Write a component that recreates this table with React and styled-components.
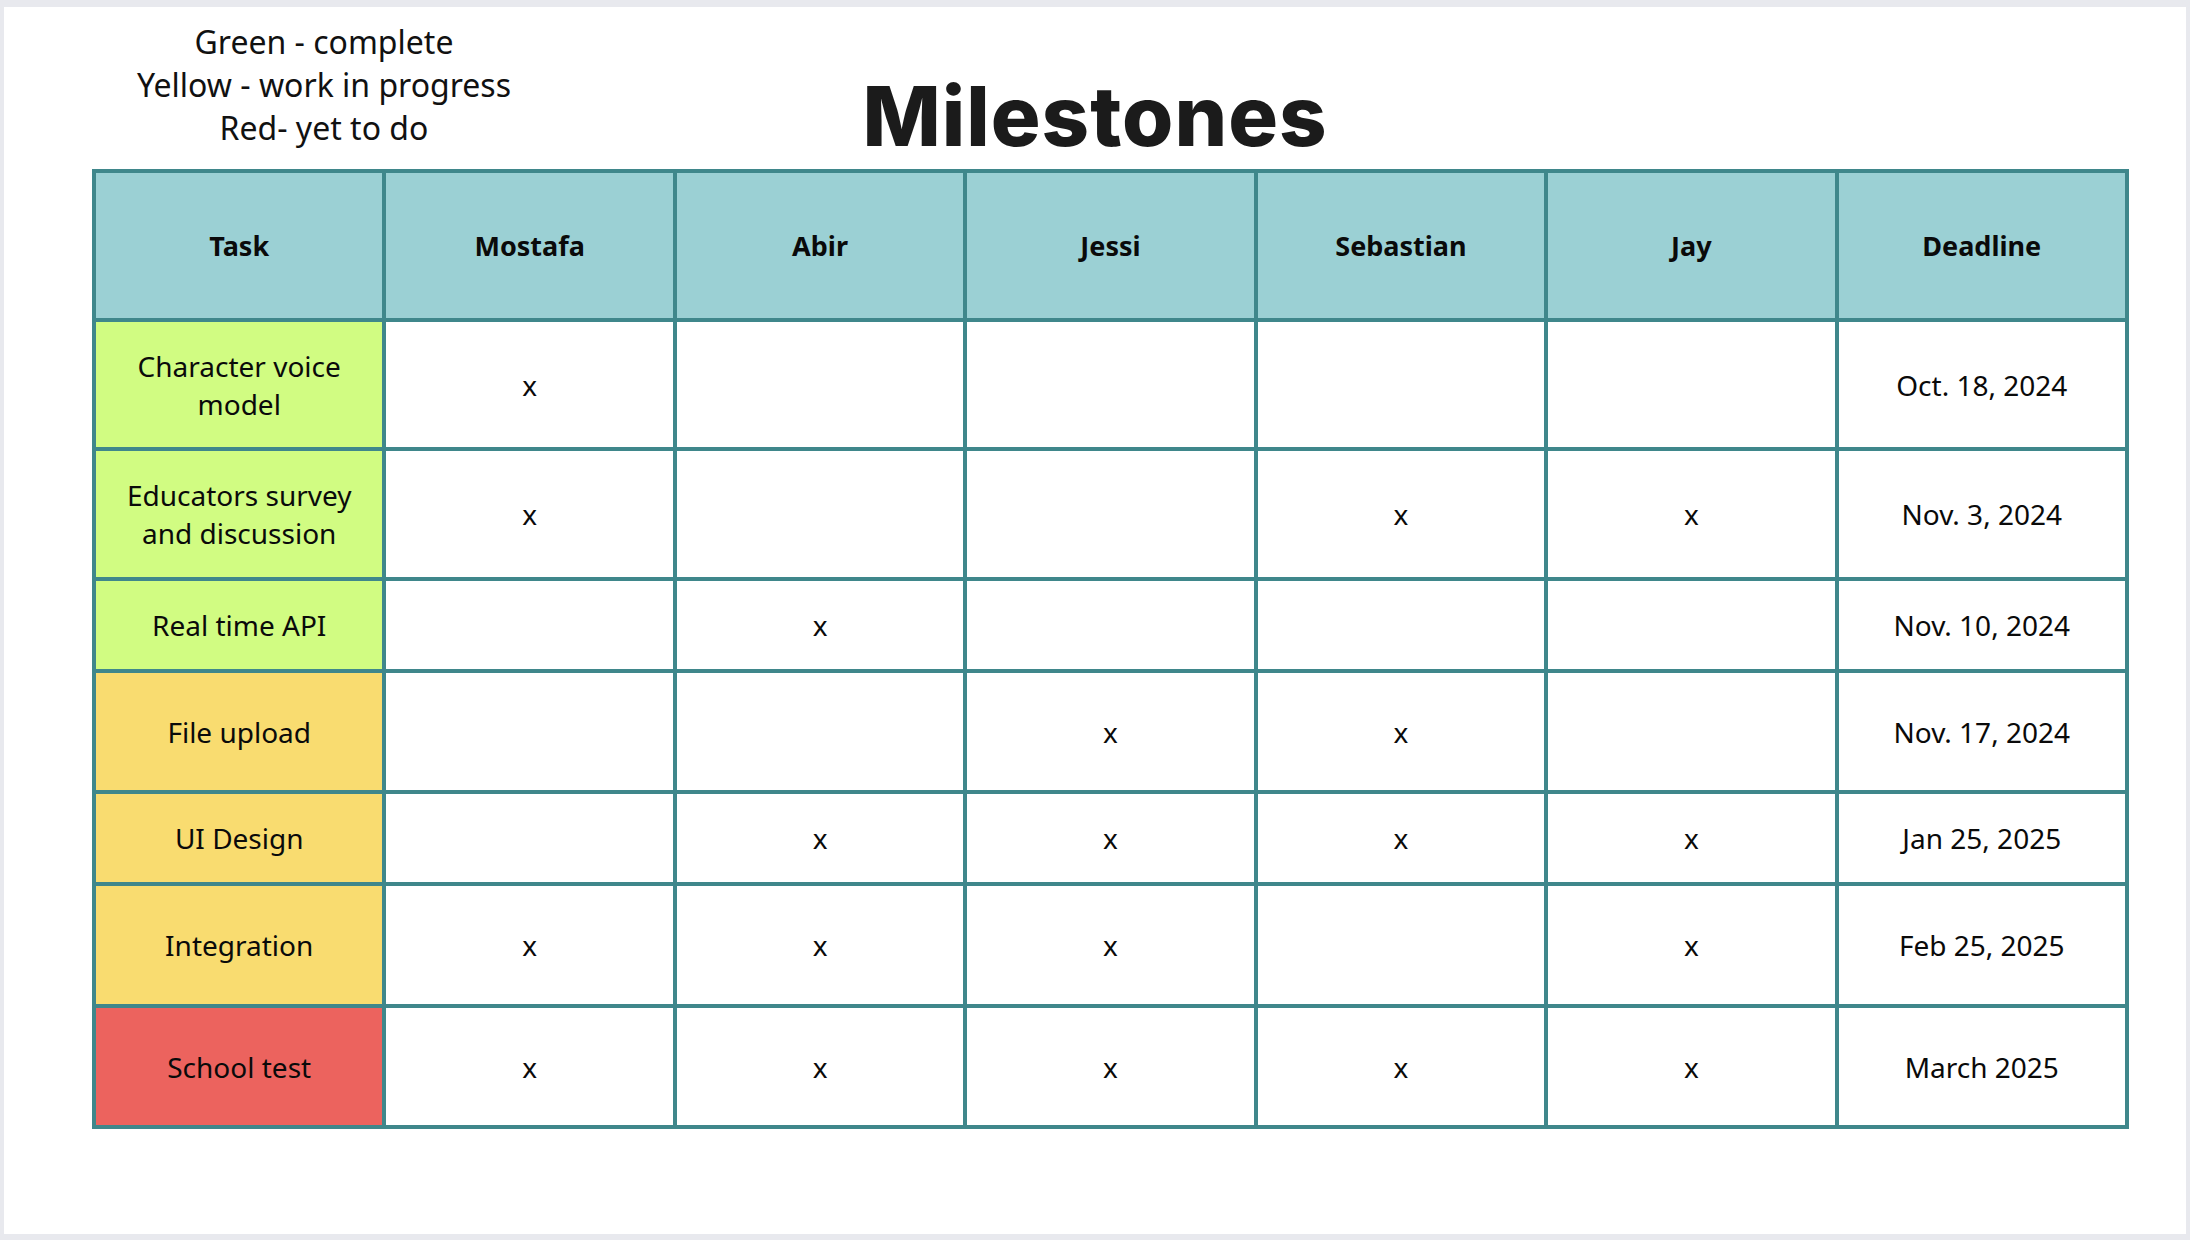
import styled, { createGlobalStyle } from "styled-components";

const GlobalStyle = createGlobalStyle`
  html, body {
    margin: 0;
    padding: 0;
    background: #e8e9ee;
  }
  body {
    font-family: "Noto Sans", "Open Sans", sans-serif;
  }
`;

const members = ["Mostafa", "Abir", "Jessi", "Sebastian", "Jay"];

const rows = [
  { task: "Character voice model", status: "done", marks: [1, 0, 0, 0, 0], deadline: "Oct. 18, 2024", height: 125 },
  { task: "Educators survey and discussion", status: "done", marks: [1, 0, 0, 1, 1], deadline: "Nov. 3, 2024", height: 126 },
  { task: "Real time API", status: "done", marks: [0, 1, 0, 0, 0], deadline: "Nov. 10, 2024", height: 88 },
  { task: "File upload", status: "progress", marks: [0, 0, 1, 1, 0], deadline: "Nov. 17, 2024", height: 117 },
  { task: "UI Design", status: "progress", marks: [0, 1, 1, 1, 1], deadline: "Jan 25, 2025", height: 88 },
  { task: "Integration", status: "progress", marks: [1, 1, 1, 0, 1], deadline: "Feb 25, 2025", height: 118 },
  { task: "School test", status: "todo", marks: [1, 1, 1, 1, 1], deadline: "March 2025", height: 117 },
];

const statusColor = {
  done: "#d1fc82",
  progress: "#f9dc70",
  todo: "#ec635e",
};

const App = () => {
  const rowHeights = [145, ...rows.map((r) => r.height)].map((h) => `${h}px`).join(" ");

  return (
    <>
      <GlobalStyle />
      <Page>
        <Canvas>
          <Header>
            <Legend>
              <span>Green - complete</span>
              <span>Yellow - work in progress</span>
              <span>Red- yet to do</span>
            </Legend>
            <Title>Milestones</Title>
          </Header>
          <Table style={{ gridTemplateRows: rowHeights }}>
            <HeadCell>Task</HeadCell>
            {members.map((m) => (
              <HeadCell key={m}>{m}</HeadCell>
            ))}
            <HeadCell>Deadline</HeadCell>
            {rows.map((row) => (
              <Row key={row.task}>
                <TaskCell $status={row.status}>
                  <TaskText>{row.task}</TaskText>
                </TaskCell>
                {row.marks.map((m, i) => (
                  <Cell key={i}>{m ? "x" : ""}</Cell>
                ))}
                <Cell>{row.deadline}</Cell>
              </Row>
            ))}
          </Table>
        </Canvas>
      </Page>
    </>
  );
};

export default App;

const Page = styled.div`
  width: 2190px;
  height: 1240px;
  padding: 7px 4px 6px 4px;
  box-sizing: border-box;
`;

const Canvas = styled.div`
  background: #ffffff;
  height: 100%;
  padding: 13px 57px 0 88px;
  box-sizing: border-box;
`;

const Header = styled.div`
  height: 149px;
  display: grid;
  grid-template-columns: 1fr auto 1fr;
  margin-left: -88px;
  margin-right: -57px;
`;

const Legend = styled.div`
  width: 640px;
  display: flex;
  flex-direction: column;
  align-items: center;
  align-self: start;
  font-family: "Noto Sans", sans-serif;
  font-size: 32px;
  line-height: 43px;
  color: #111111;
`;

const Title = styled.h1`
  margin: 0 0 11px 0;
  align-self: end;
  font-family: Inter, "Noto Sans", sans-serif;
  font-weight: 800;
  font-size: 83px;
  line-height: 1;
  letter-spacing: 1px;
  color: #1b1b1b;
`;

const Table = styled.div`
  width: 2037px;
  display: grid;
  grid-template-columns: repeat(7, 1fr);
  gap: 4px;
  padding: 4px;
  box-sizing: border-box;
  background: #3f878b;
`;

const Row = styled.div`
  display: contents;
`;

const BaseCell = styled.div`
  display: flex;
  align-items: center;
  justify-content: center;
  text-align: center;
  font-family: "Noto Sans", sans-serif;
  font-size: 28px;
  color: #0a0a0a;
`;

const HeadCell = styled(BaseCell)`
  background: #9bd0d4;
  font-weight: 700;
  font-size: 27px;
`;

const Cell = styled(BaseCell)`
  background: #ffffff;
`;

const TaskCell = styled(BaseCell)`
  background: ${(p) => statusColor[p.$status]};
`;

const TaskText = styled.span`
  max-width: 260px;
  line-height: 38px;
`;
